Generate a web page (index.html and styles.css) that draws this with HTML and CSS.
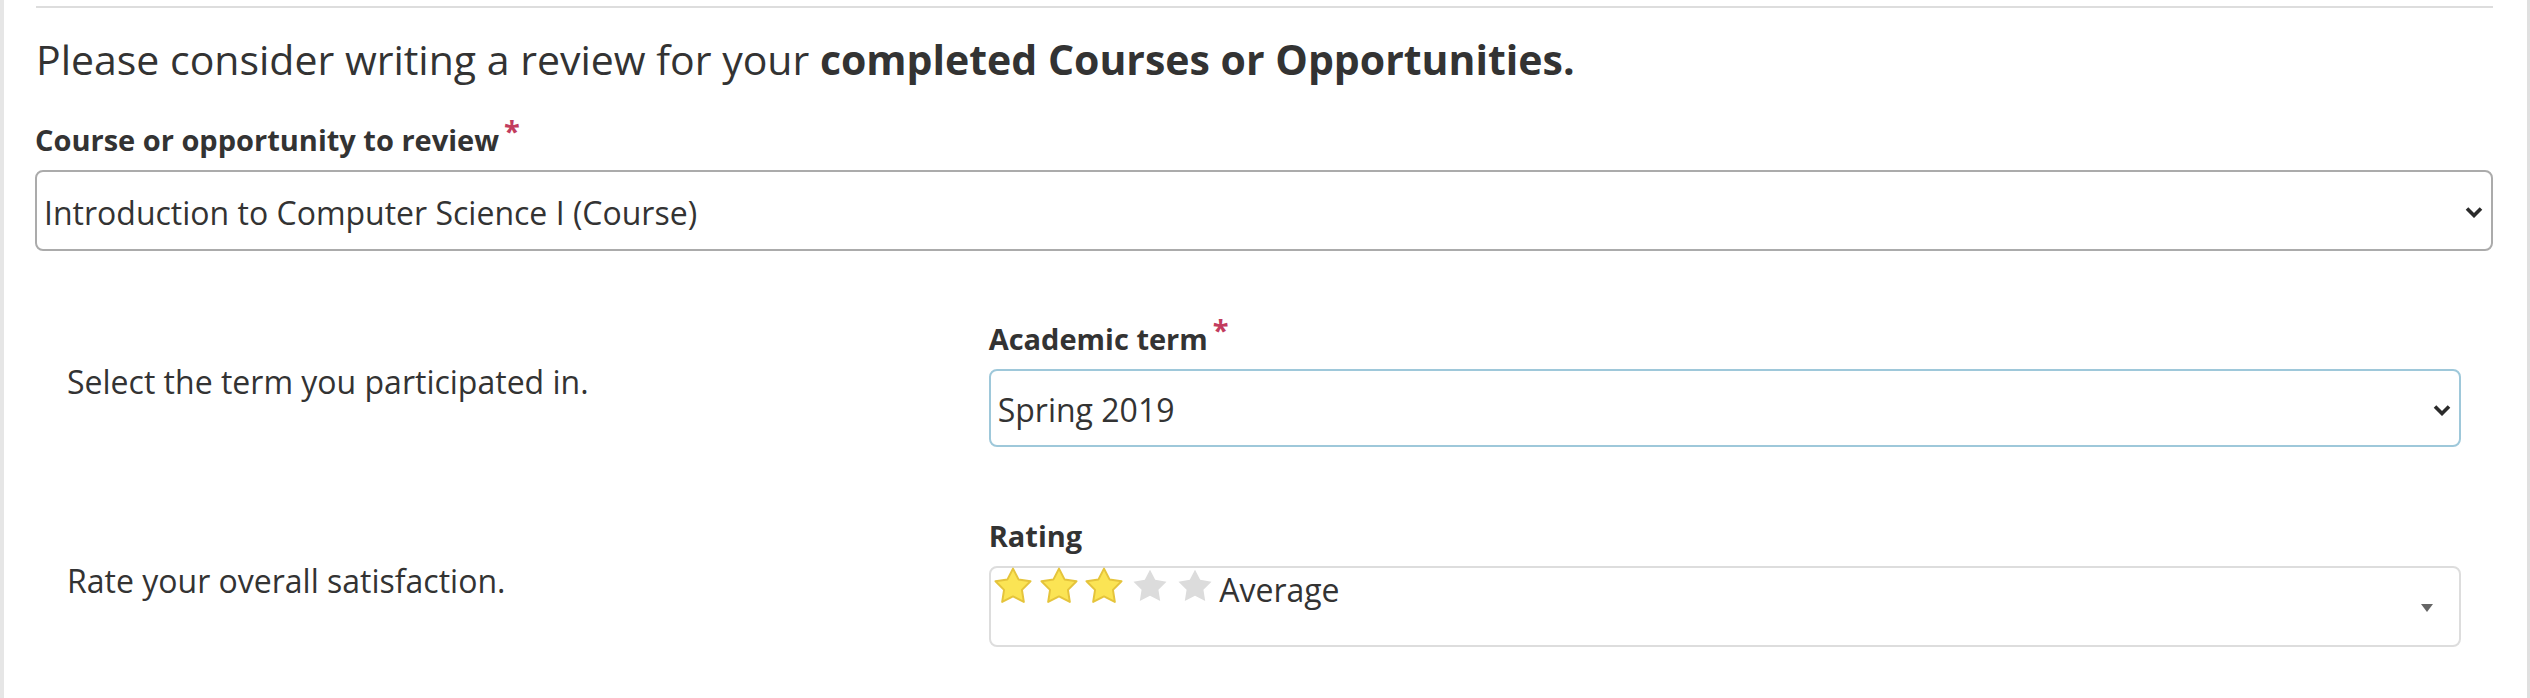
FILE: index.html
```html
<!DOCTYPE html>
<html lang="en">
<head>
<meta charset="utf-8">
<title>Write a review</title>
<link rel="stylesheet" href="styles.css">
</head>
<body>
<div class="page">
  <div class="divider"></div>
  <h2 class="heading">Please consider writing a review for your <strong>completed Courses or Opportunities.</strong></h2>

  <div class="field">
    <label class="label">Course or opportunity to review<span class="req">*</span></label>
    <div class="select select-course">
      <span class="select-text">Introduction to Computer Science I (Course)</span>
      <svg class="chevron" width="18" height="12" viewBox="0 0 18 12"><polyline points="2,2.5 9,9.5 16,2.5" fill="none" stroke="#2b2b2b" stroke-width="3.6"/></svg>
    </div>
  </div>

  <div class="rows">
    <div class="row">
      <div class="desc">Select the term you participated in.</div>
      <div class="field">
        <label class="label">Academic term<span class="req">*</span></label>
        <div class="select select-term">
          <span class="select-text">Spring 2019</span>
          <svg class="chevron" width="18" height="12" viewBox="0 0 18 12"><polyline points="2,2.5 9,9.5 16,2.5" fill="none" stroke="#2b2b2b" stroke-width="3.6"/></svg>
        </div>
      </div>
    </div>

    <div class="row">
      <div class="desc">Rate your overall satisfaction.</div>
      <div class="field">
        <label class="label">Rating</label>
        <div class="rating-box">
          <div class="rating-value">
            <span class="star on"><svg width="46" height="36" viewBox="0 0 46 36"><path d="M23 1.6 L28.53 12.4 L40.5 14.31 L31.94 22.9 L33.82 34.89 L23 29.4 L12.18 34.89 L14.06 22.9 L5.5 14.31 L17.47 12.4 Z" fill="#fbe454" stroke="#e5c43b" stroke-width="2" stroke-linejoin="round"/></svg></span><span class="star on"><svg width="46" height="36" viewBox="0 0 46 36"><path d="M23 1.6 L28.53 12.4 L40.5 14.31 L31.94 22.9 L33.82 34.89 L23 29.4 L12.18 34.89 L14.06 22.9 L5.5 14.31 L17.47 12.4 Z" fill="#fbe454" stroke="#e5c43b" stroke-width="2" stroke-linejoin="round"/></svg></span><span class="star on"><svg width="46" height="36" viewBox="0 0 46 36"><path d="M23 1.6 L28.53 12.4 L40.5 14.31 L31.94 22.9 L33.82 34.89 L23 29.4 L12.18 34.89 L14.06 22.9 L5.5 14.31 L17.47 12.4 Z" fill="#fbe454" stroke="#e5c43b" stroke-width="2" stroke-linejoin="round"/></svg></span><span class="star"><svg width="46" height="36" viewBox="0 0 46 36"><path transform="translate(23 20) scale(0.943) translate(-23 -20)" d="M23 1.6 L28.53 12.4 L40.5 14.31 L31.94 22.9 L33.82 34.89 L23 29.4 L12.18 34.89 L14.06 22.9 L5.5 14.31 L17.47 12.4 Z" fill="#dcdcdc"/></svg></span><span class="star"><svg width="46" height="36" viewBox="0 0 46 36"><path transform="translate(23 20) scale(0.943) translate(-23 -20)" d="M23 1.6 L28.53 12.4 L40.5 14.31 L31.94 22.9 L33.82 34.89 L23 29.4 L12.18 34.89 L14.06 22.9 L5.5 14.31 L17.47 12.4 Z" fill="#dcdcdc"/></svg></span><span class="rating-text">Average</span>
          </div>
          <span class="caret"></span>
        </div>
      </div>
    </div>
  </div>
</div>
</body>
</html>
```

FILE: styles.css
```css
html, body {
  margin: 0;
  padding: 0;
  background: #ffffff;
}

body {
  font-family: "Open Sans", "Liberation Sans", sans-serif;
  color: #333333;
}

.page {
  box-sizing: border-box;
  min-height: 698px;
  border-left: 4px solid #e6e6e6;
  border-right: 3px solid #e0e0e0;
  padding: 6px 34px 0 31px;
}

.divider {
  height: 2px;
  background: #dddddd;
  margin-left: 1px;
}

.heading {
  font-family: "Open Sans", "Liberation Sans", sans-serif;
  font-size: 41px;
  line-height: 46px;
  font-weight: 500;
  color: #333333;
  margin: 28px 0 36px 1px;
  letter-spacing: 0;
}

.heading strong {
  font-weight: 700;
}

.field {
  display: flex;
  flex-direction: column;
}

.label {
  font-size: 29px;
  line-height: 43px;
  font-weight: 700;
  color: #333333;
  margin-bottom: 9px;
}

.req {
  color: #c23c5e;
  margin-left: 5px;
  line-height: 0;
  vertical-align: 9px;
}

.select {
  box-sizing: border-box;
  display: flex;
  align-items: center;
  border: 2px solid #ababab;
  border-radius: 8px;
  padding: 3px 8px 0 7px;
  background: #ffffff;
}

.select-course {
  height: 81px;
}

.select-term {
  height: 78px;
  border-color: #9ec8da;
}

.select-text {
  font-size: 32px;
  color: #333333;
  white-space: nowrap;
}

.chevron {
  margin-left: auto;
  flex: none;
}

.rows {
  padding: 66px 32px 0 32px;
  display: flex;
  flex-direction: column;
  gap: 67px;
}

.row {
  display: grid;
  grid-template-columns: 38.5% 1fr;
  align-items: center;
}

.desc {
  font-size: 32px;
  line-height: 44px;
  color: #333333;
}

.rating-box {
  box-sizing: border-box;
  height: 81px;
  border: 2px solid #dddddd;
  border-radius: 8px;
  display: flex;
  align-items: flex-start;
  padding: 0 26px 0 0;
}

.rating-value {
  margin-top: -1px;
  font-size: 32px;
  line-height: 36px;
  white-space: nowrap;
}

.star {
  display: inline-block;
  width: 45.5px;
  height: 36px;
  vertical-align: bottom;
}

.star svg {
  display: block;
  margin-left: -0.25px;
}

.rating-text {
  display: inline-block;
  vertical-align: bottom;
  line-height: 36px;
  position: relative;
  top: 5px;
  margin-left: 1px;
}

.caret {
  align-self: center;
  margin-left: auto;
  margin-top: 2px;
  width: 0;
  height: 0;
  border-style: solid;
  border-width: 8px 6.5px 0 6.5px;
  border-color: #666666 transparent transparent transparent;
}
```
